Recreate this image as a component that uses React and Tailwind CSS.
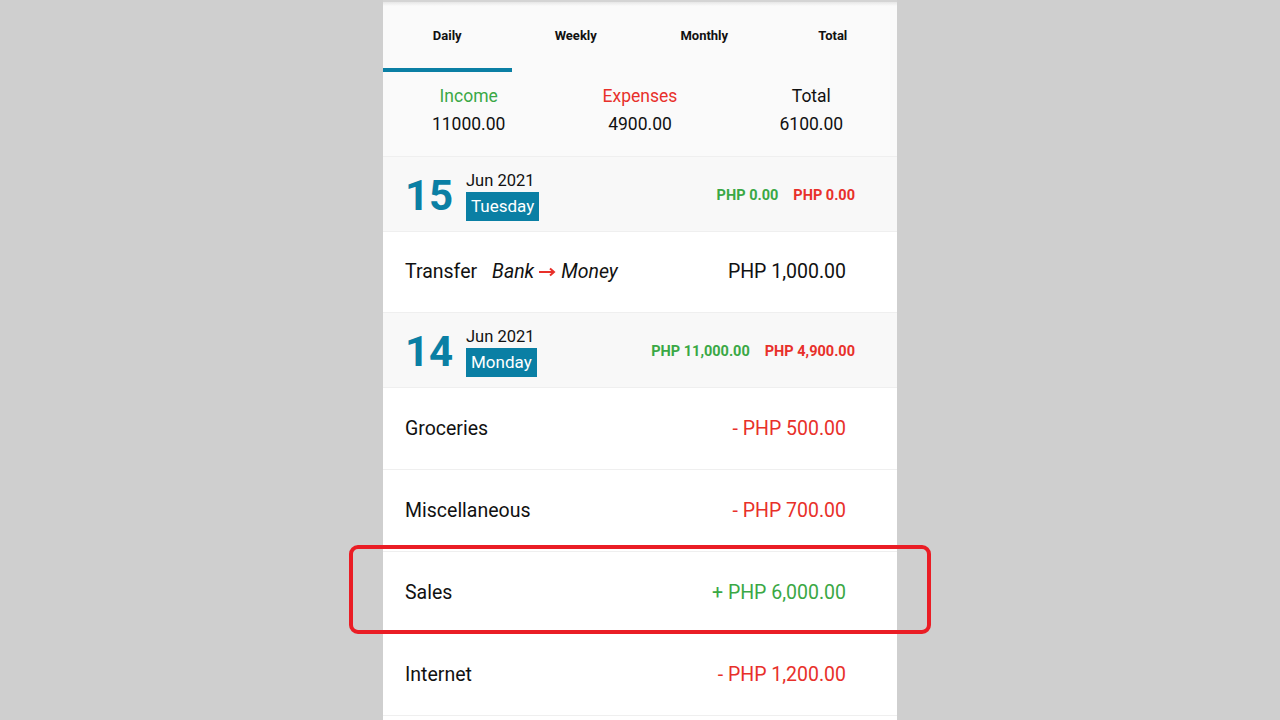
import React from "react";

const tabs = ["Daily", "Weekly", "Monthly", "Total"];

function DayHeader({ day, month, weekday, income, expense }) {
  return (
    <div className="flex h-[75px] items-center justify-between border-b border-[#efefef] bg-[#f8f8f8] pl-[22px] pr-[42px] pt-[4px]">
      <div className="flex items-center">
        <span className="w-[61px] text-[42px] font-bold leading-none text-[#0a7fa4]">
          {day}
        </span>
        <div className="flex flex-col items-start">
          <span className="text-[16.5px] leading-[20px] text-[#111]">{month}</span>
          <span className="mt-[1px] bg-[#0a7fa4] px-[5px] text-[17px] leading-[29px] text-white">
            {weekday}
          </span>
        </div>
      </div>
      <div className="flex gap-[15px] text-[14.5px] font-bold">
        <span className="text-[#3aa845]">{income}</span>
        <span className="text-[#e8302a]">{expense}</span>
      </div>
    </div>
  );
}

function Row({ label, amount, color, h = "h-[82px]", children }) {
  return (
    <div className={`flex ${h} items-center justify-between border-b border-[#efefef] bg-white pl-[22px] pr-[51px] text-[19.5px]`}>
      <div className="flex items-center text-[#111]">
        <span>{label}</span>
        {children}
      </div>
      <span className={color}>{amount}</span>
    </div>
  );
}

export default function App() {
  return (
    <div
      className="relative flex h-[720px] w-[1280px] justify-center overflow-hidden bg-[#cfcfcf]"
      style={{ fontFamily: "Roboto, 'Noto Sans', sans-serif" }}
    >
      <div className="w-[514px] bg-[#fafafa]">
        <div className="h-[2px] bg-[#d4d4d4]" />
        <div className="h-[4px] bg-gradient-to-b from-[#e6e6e6] to-[#fafafa]" />

        <div className="flex h-[66px]">
          {tabs.map((t, i) => (
            <div key={t} className="flex flex-1 flex-col">
              <div className="flex flex-1 items-start justify-center pt-[20px] text-[13px] font-bold text-[#111]">
                {t}
              </div>
              <div className={i === 0 ? "h-[4px] bg-[#0a7fa4]" : "h-[4px]"} />
            </div>
          ))}
        </div>

        <div className="flex h-[85px] border-b border-[#efefef] pt-[10px]">
          {[
            ["Income", "11000.00", "text-[#3aa845]"],
            ["Expenses", "4900.00", "text-[#e8302a]"],
            ["Total", "6100.00", "text-[#111]"],
          ].map(([l, v, c]) => (
            <div key={l} className="flex flex-1 flex-col items-center text-[17.5px] leading-[28px]">
              <span className={c}>{l}</span>
              <span className="text-[#111]">{v}</span>
            </div>
          ))}
        </div>

        <DayHeader day="15" month="Jun 2021" weekday="Tuesday" income="PHP 0.00" expense="PHP 0.00" />
        <Row label="Transfer" amount="PHP 1,000.00" color="text-[#111]" h="h-[81px]">
          <span className="ml-[15px] flex items-center italic">
            Bank
            <svg width="20" height="10" viewBox="0 0 20 10" className="mx-[3px]">
              <path d="M2 5h14" stroke="#e8302a" strokeWidth="2" />
              <path d="M13 1.5l4 3.5-4 3.5" fill="none" stroke="#e8302a" strokeWidth="2" />
            </svg>
            <span className="pl-[1px]">Money</span>
          </span>
        </Row>

        <DayHeader day="14" month="Jun 2021" weekday="Monday" income="PHP 11,000.00" expense="PHP 4,900.00" />
        <Row label="Groceries" amount="- PHP 500.00" color="text-[#e8302a]" />
        <Row label="Miscellaneous" amount="- PHP 700.00" color="text-[#e8302a]" />
        <Row label="Sales" amount="+ PHP 6,000.00" color="text-[#3aa845]" />
        <Row label="Internet" amount="- PHP 1,200.00" color="text-[#e8302a]" />
        <div className="h-[20px] bg-white" />
      </div>

      <div className="pointer-events-none absolute left-[349px] top-[545px] h-[89px] w-[582px] rounded-[9px] border-[4px] border-[#ea1d25]" />
    </div>
  );
}
